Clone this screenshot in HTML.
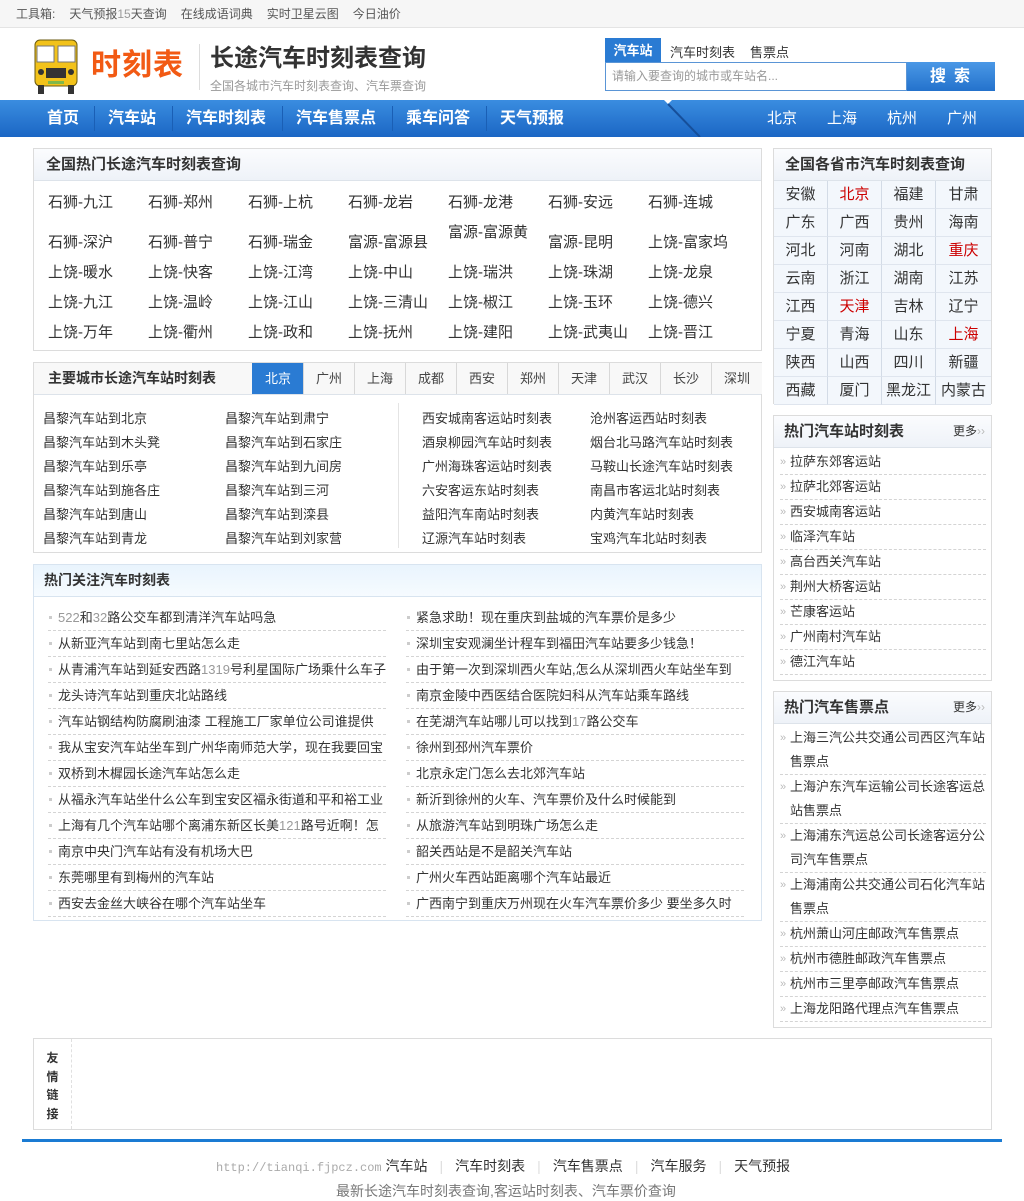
<!DOCTYPE html>
<html><head><meta charset="utf-8">
<style>
*{margin:0;padding:0;box-sizing:border-box}
body{width:1024px;height:1200px;position:relative;background:#fff;font-family:"Liberation Sans","Noto Sans CJK SC",sans-serif;color:#333;overflow:hidden}
.a{position:absolute;white-space:nowrap}
.top{left:0;top:0;width:1024px;height:28px;background:#f6f6f6;border-bottom:1px solid #e4e4e4;font-size:12px;color:#555;line-height:28px;padding-left:16px}
.top span{margin-right:14px}
.nav{left:0;top:100px;width:1024px;height:37px;background:linear-gradient(#3a8de0,#1b66c4);color:#fff}
.nav .i{position:absolute;top:0;line-height:37px;font-size:16px;font-weight:bold}
.nav .c{position:absolute;top:0;line-height:37px;font-size:15px}
.sep{position:absolute;top:6px;width:1px;height:25px;background:#5b9ee3;border-right:1px solid #1a5fb5}
.box{position:absolute;border:1px solid #dcdcdc;background:#fff}
.hd{height:32px;background:linear-gradient(#fbfcfe,#eef2f8);border-bottom:1px solid #dde3ea;font-size:15px;font-weight:bold;line-height:31px;padding-left:12px;color:#333}
.r1 span{position:absolute;font-size:15px;color:#333}
.l13{font-size:13px;color:#333}
.tab{position:absolute;top:0;height:31px;width:51px;border-left:1px solid #d8d8d8;text-align:center;line-height:31px;font-size:13px;color:#444;background:#f8f8f8}
.hot{position:absolute;font-size:13px;color:#333;width:338px;height:26px;line-height:26px;border-bottom:1px dashed #d4d4d4;padding-left:10px;overflow:hidden}
.hot:before{content:"";position:absolute;left:1px;top:11px;width:3px;height:3px;background:#ccc}
.grid{position:absolute;left:0;top:32px;width:217px}
.grid div{float:left;width:54px;height:28px;line-height:28px;text-align:center;font-size:15px;border-right:1px solid #d3dbe6;border-bottom:1px solid #dfe5ee;background:#f3f7fc}
.grid div:nth-child(4n){border-right:none;width:55px}
.red{color:#c00}
.side{position:absolute;left:6px;width:206px;font-size:13px;line-height:24px;border-bottom:1px dashed #d4d4d4;padding-left:10px;color:#333;white-space:normal}
.side:before{content:"»";position:absolute;left:0;top:0;color:#bbb;font-size:11px}
.more{position:absolute;right:6px;top:0;font-size:12px;font-weight:normal;color:#333}
.fs{color:#ddd;margin:0 12px}
</style></head><body>
<div class="a top"><span>工具箱:</span><span>天气预报<span style="color:#999;margin:0">15</span>天查询</span><span>在线成语词典</span><span>实时卫星云图</span><span>今日油价</span></div>

<svg class="a" style="left:33px;top:38px" width="46" height="56" viewBox="0 0 46 56">
<rect x="2" y="2" width="42" height="46" rx="5" fill="#f2c21a" stroke="#6a5a10" stroke-width="1"/>
<rect x="4" y="8" width="17" height="16" fill="#fff" stroke="#777"/>
<rect x="25" y="8" width="17" height="16" fill="#fff" stroke="#777"/>
<rect x="13" y="30" width="20" height="10" fill="#333"/>
<circle cx="8" cy="34" r="3" fill="#333"/><circle cx="38" cy="34" r="3" fill="#333"/>
<rect x="5" y="47" width="6" height="9" fill="#333"/><rect x="35" y="47" width="6" height="9" fill="#333"/>
<rect x="15" y="43" width="16" height="3" fill="#7fb84a"/>
</svg>
<div class="a" style="left:91px;top:40px;font-size:30px;font-weight:bold;color:#f25a14;letter-spacing:1px">时刻表</div>
<div class="a" style="left:199px;top:44px;width:1px;height:46px;background:#ddd"></div>
<div class="a" style="left:210px;top:38px;font-size:24px;font-weight:bold;color:#333">长途汽车时刻表查询</div>
<div class="a" style="left:210px;top:77px;font-size:12px;color:#999">全国各城市汽车时刻表查询、汽车票查询</div>

<div class="a" style="left:605px;top:38px;width:56px;height:25px;background:#2a7bd3;color:#fff;font-size:13px;font-weight:bold;text-align:center;line-height:25px">汽车站</div>
<div class="a" style="left:670px;top:42px;font-size:13px;color:#333">汽车时刻表</div>
<div class="a" style="left:750px;top:42px;font-size:13px;color:#333">售票点</div>
<div class="a" style="left:605px;top:62px;width:302px;height:29px;border:1px solid #5a95d6;font-size:12px;color:#999;line-height:27px;padding-left:6px">请输入要查询的城市或车站名...</div>
<div class="a" style="left:907px;top:62px;width:88px;height:29px;background:linear-gradient(#4a98e6,#2472cc);color:#fff;font-size:16px;font-weight:bold;text-align:center;line-height:29px;letter-spacing:8px;padding-left:6px">搜索</div>

<div class="a nav">
<span class="i" style="left:47px">首页</span><div class="sep" style="left:94px"></div>
<span class="i" style="left:108px">汽车站</span><div class="sep" style="left:172px"></div>
<span class="i" style="left:186px">汽车时刻表</span><div class="sep" style="left:282px"></div>
<span class="i" style="left:296px">汽车售票点</span><div class="sep" style="left:392px"></div>
<span class="i" style="left:406px">乘车问答</span><div class="sep" style="left:486px"></div>
<span class="i" style="left:500px">天气预报</span>
<svg style="position:absolute;left:660px;top:0" width="50" height="37"><path d="M4 0 L12 0 L8 4 Z" fill="#fff"/><path d="M8 4 L40 37" stroke="#164f9a" stroke-width="2"/></svg>
<span class="c" style="left:767px">北京</span><span class="c" style="left:827px">上海</span><span class="c" style="left:887px">杭州</span><span class="c" style="left:947px">广州</span>
</div>

<div class="box r1" style="left:33px;top:148px;width:729px;height:203px">
<div class="hd">全国热门长途汽车时刻表查询</div>
<span style="left:14px;top:42px">石狮-九江</span><span style="left:114px;top:42px">石狮-郑州</span><span style="left:214px;top:42px">石狮-上杭</span><span style="left:314px;top:42px">石狮-龙岩</span><span style="left:414px;top:42px">石狮-龙港</span><span style="left:514px;top:42px">石狮-安远</span><span style="left:614px;top:42px">石狮-连城</span>
<span style="left:14px;top:82px">石狮-深沪</span><span style="left:114px;top:82px">石狮-普宁</span><span style="left:214px;top:82px">石狮-瑞金</span><span style="left:314px;top:82px">富源-富源县</span><span style="left:414px;top:72px">富源-富源黄</span><span style="left:514px;top:82px">富源-昆明</span><span style="left:614px;top:82px">上饶-富家坞</span>
<span style="left:14px;top:112px">上饶-暖水</span><span style="left:114px;top:112px">上饶-快客</span><span style="left:214px;top:112px">上饶-江湾</span><span style="left:314px;top:112px">上饶-中山</span><span style="left:414px;top:112px">上饶-瑞洪</span><span style="left:514px;top:112px">上饶-珠湖</span><span style="left:614px;top:112px">上饶-龙泉</span>
<span style="left:14px;top:142px">上饶-九江</span><span style="left:114px;top:142px">上饶-温岭</span><span style="left:214px;top:142px">上饶-江山</span><span style="left:314px;top:142px">上饶-三清山</span><span style="left:414px;top:142px">上饶-椒江</span><span style="left:514px;top:142px">上饶-玉环</span><span style="left:614px;top:142px">上饶-德兴</span>
<span style="left:14px;top:172px">上饶-万年</span><span style="left:114px;top:172px">上饶-衢州</span><span style="left:214px;top:172px">上饶-政和</span><span style="left:314px;top:172px">上饶-抚州</span><span style="left:414px;top:172px">上饶-建阳</span><span style="left:514px;top:172px">上饶-武夷山</span><span style="left:614px;top:172px">上饶-晋江</span>
</div>

<div class="box" style="left:33px;top:362px;width:729px;height:191px">
<div class="hd" style="background:#f8f8f8;font-size:14px;padding-left:14px">主要城市长途汽车站时刻表</div>
<div class="tab" style="left:218px;background:#2a7bd3;color:#fff;border-color:#2a7bd3">北京</div>
<div class="tab" style="left:269px">广州</div><div class="tab" style="left:320px">上海</div><div class="tab" style="left:371px">成都</div><div class="tab" style="left:422px">西安</div><div class="tab" style="left:473px">郑州</div><div class="tab" style="left:524px">天津</div><div class="tab" style="left:575px">武汉</div><div class="tab" style="left:626px">长沙</div><div class="tab" style="left:677px">深圳</div>
<div class="a" style="left:364px;top:40px;width:1px;height:145px;background:#e4e4e4"></div>
<div class="a l13" style="left:9px;top:44px;line-height:24px">昌黎汽车站到北京<br>昌黎汽车站到木头凳<br>昌黎汽车站到乐亭<br>昌黎汽车站到施各庄<br>昌黎汽车站到唐山<br>昌黎汽车站到青龙</div>
<div class="a l13" style="left:191px;top:44px;line-height:24px">昌黎汽车站到肃宁<br>昌黎汽车站到石家庄<br>昌黎汽车站到九间房<br>昌黎汽车站到三河<br>昌黎汽车站到滦县<br>昌黎汽车站到刘家营</div>
<div class="a l13" style="left:388px;top:44px;line-height:24px">西安城南客运站时刻表<br>酒泉柳园汽车站时刻表<br>广州海珠客运站时刻表<br>六安客运东站时刻表<br>益阳汽车南站时刻表<br>辽源汽车站时刻表</div>
<div class="a l13" style="left:556px;top:44px;line-height:24px">沧州客运西站时刻表<br>烟台北马路汽车站时刻表<br>马鞍山长途汽车站时刻表<br>南昌市客运北站时刻表<br>内黄汽车站时刻表<br>宝鸡汽车北站时刻表</div>
</div>

<div class="box" style="left:33px;top:564px;width:729px;height:357px;border-color:#d8e4f0">
<div class="hd" style="background:linear-gradient(#e9f4fd,#f6fbff);font-size:14px;padding-left:10px;border-color:#d8e4f0">热门关注汽车时刻表</div>
<div class="hot" style="left:14px;top:40px"><span style="color:#999">522</span>和<span style="color:#999">32</span>路公交车都到清洋汽车站吗急</div>
<div class="hot" style="left:14px;top:66px">从新亚汽车站到南七里站怎么走</div>
<div class="hot" style="left:14px;top:92px">从青浦汽车站到延安西路<span style="color:#999">1319</span>号利星国际广场乘什么车子在什</div>
<div class="hot" style="left:14px;top:118px">龙头诗汽车站到重庆北站路线</div>
<div class="hot" style="left:14px;top:144px">汽车站钢结构防腐刷油漆 工程施工厂家单位公司谁提供一个</div>
<div class="hot" style="left:14px;top:170px">我从宝安汽车站坐车到广州华南师范大学，现在我要回宝安了</div>
<div class="hot" style="left:14px;top:196px">双桥到木樨园长途汽车站怎么走</div>
<div class="hot" style="left:14px;top:222px">从福永汽车站坐什么公车到宝安区福永街道和平和裕工业区</div>
<div class="hot" style="left:14px;top:248px">上海有几个汽车站哪个离浦东新区长美<span style="color:#999">121</span>路号近啊！怎么换乘</div>
<div class="hot" style="left:14px;top:274px">南京中央门汽车站有没有机场大巴</div>
<div class="hot" style="left:14px;top:300px">东莞哪里有到梅州的汽车站</div>
<div class="hot" style="left:14px;top:326px">西安去金丝大峡谷在哪个汽车站坐车</div>
<div class="hot" style="left:372px;top:40px">紧急求助！现在重庆到盐城的汽车票价是多少</div>
<div class="hot" style="left:372px;top:66px">深圳宝安观澜坐计程车到福田汽车站要多少钱急！</div>
<div class="hot" style="left:372px;top:92px">由于第一次到深圳西火车站,怎么从深圳西火车站坐车到龙华汽</div>
<div class="hot" style="left:372px;top:118px">南京金陵中西医结合医院妇科从汽车站乘车路线</div>
<div class="hot" style="left:372px;top:144px">在芜湖汽车站哪儿可以找到<span style="color:#999">17</span>路公交车</div>
<div class="hot" style="left:372px;top:170px">徐州到邳州汽车票价</div>
<div class="hot" style="left:372px;top:196px">北京永定门怎么去北郊汽车站</div>
<div class="hot" style="left:372px;top:222px">新沂到徐州的火车、汽车票价及什么时候能到</div>
<div class="hot" style="left:372px;top:248px">从旅游汽车站到明珠广场怎么走</div>
<div class="hot" style="left:372px;top:274px">韶关西站是不是韶关汽车站</div>
<div class="hot" style="left:372px;top:300px">广州火车西站距离哪个汽车站最近</div>
<div class="hot" style="left:372px;top:326px">广西南宁到重庆万州现在火车汽车票价多少 要坐多久时间</div>
</div>

<div class="box" style="left:773px;top:148px;width:219px;height:256px">
<div class="hd" style="padding-left:11px">全国各省市汽车时刻表查询</div>
<div class="grid">
<div>安徽</div><div class="red">北京</div><div>福建</div><div>甘肃</div>
<div>广东</div><div>广西</div><div>贵州</div><div>海南</div>
<div>河北</div><div>河南</div><div>湖北</div><div class="red">重庆</div>
<div>云南</div><div>浙江</div><div>湖南</div><div>江苏</div>
<div>江西</div><div class="red">天津</div><div>吉林</div><div>辽宁</div>
<div>宁夏</div><div>青海</div><div>山东</div><div class="red">上海</div>
<div>陕西</div><div>山西</div><div>四川</div><div>新疆</div>
<div>西藏</div><div>厦门</div><div>黑龙江</div><div>内蒙古</div>
</div>
</div>

<div class="box" style="left:773px;top:415px;width:219px;height:266px">
<div class="hd" style="padding-left:10px">热门汽车站时刻表<span class="more">更多<span style="color:#bbb">››</span></span></div>
<div class="side" style="top:34px">拉萨东郊客运站</div>
<div class="side" style="top:59px">拉萨北郊客运站</div>
<div class="side" style="top:84px">西安城南客运站</div>
<div class="side" style="top:109px">临泽汽车站</div>
<div class="side" style="top:134px">高台西关汽车站</div>
<div class="side" style="top:159px">荆州大桥客运站</div>
<div class="side" style="top:184px">芒康客运站</div>
<div class="side" style="top:209px">广州南村汽车站</div>
<div class="side" style="top:234px">德江汽车站</div>
</div>

<div class="box" style="left:773px;top:691px;width:219px;height:337px">
<div class="hd" style="padding-left:10px">热门汽车售票点<span class="more">更多<span style="color:#bbb">››</span></span></div>
<div class="side" style="top:34px">上海三汽公共交通公司西区汽车站售票点</div>
<div class="side" style="top:83px">上海沪东汽车运输公司长途客运总站售票点</div>
<div class="side" style="top:132px">上海浦东汽运总公司长途客运分公司汽车售票点</div>
<div class="side" style="top:181px">上海浦南公共交通公司石化汽车站售票点</div>
<div class="side" style="top:230px">杭州萧山河庄邮政汽车售票点</div>
<div class="side" style="top:255px">杭州市德胜邮政汽车售票点</div>
<div class="side" style="top:280px">杭州市三里亭邮政汽车售票点</div>
<div class="side" style="top:305px">上海龙阳路代理点汽车售票点</div>
</div>

<div class="box" style="left:33px;top:1038px;width:959px;height:92px">
<div class="a" style="left:0;top:0;width:38px;height:90px;border-right:1px dashed #e0e0e0;font-size:12px;font-weight:bold;text-align:center;line-height:18.5px;padding-top:10px;white-space:normal">友<br>情<br>链<br>接</div>
</div>
<div class="a" style="left:22px;top:1139px;width:980px;height:3px;background:#1a7bd3"></div>
<div class="a" style="left:216px;top:1156px;font-size:14px;color:#333"><span style="font-family:'Liberation Mono',monospace;font-size:12px;color:#aaa">http://tianqi.fjpcz.com</span> 汽车站<span class="fs">|</span>汽车时刻表<span class="fs">|</span>汽车售票点<span class="fs">|</span>汽车服务<span class="fs">|</span>天气预报</div>
<div class="a" style="left:336px;top:1181px;font-size:14px;color:#777">最新长途汽车时刻表查询,客运站时刻表、汽车票价查询</div>
</body></html>
